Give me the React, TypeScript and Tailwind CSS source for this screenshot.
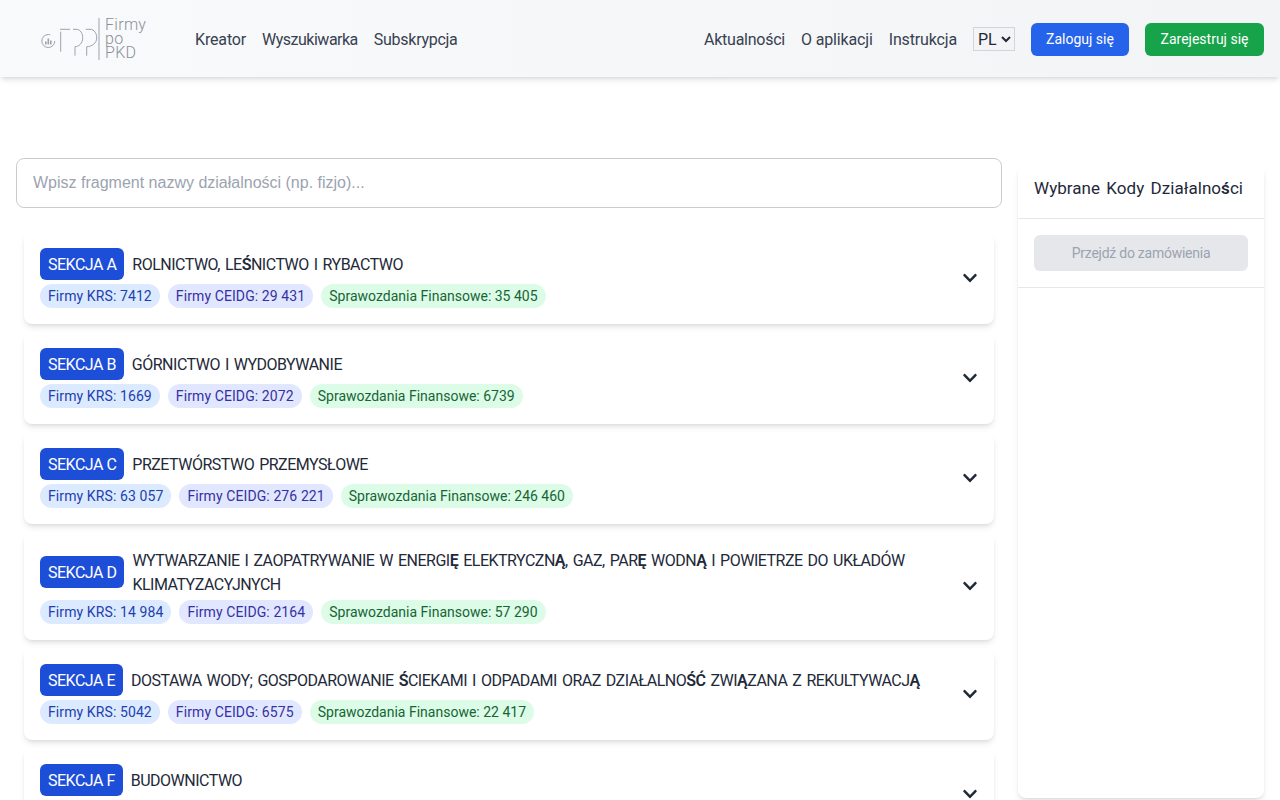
import { FaChevronDown } from "react-icons/fa";

const sections = [
  { letter: "A", title: "ROLNICTWO, LEŚNICTWO I RYBACTWO", krs: "7412", ceidg: "29 431", fin: "35 405" },
  { letter: "B", title: "GÓRNICTWO I WYDOBYWANIE", krs: "1669", ceidg: "2072", fin: "6739" },
  { letter: "C", title: "PRZETWÓRSTWO PRZEMYSŁOWE", krs: "63 057", ceidg: "276 221", fin: "246 460" },
  {
    letter: "D",
    title: "WYTWARZANIE I ZAOPATRYWANIE W ENERGIĘ ELEKTRYCZNĄ, GAZ, PARĘ WODNĄ I POWIETRZE DO UKŁADÓW KLIMATYZACYJNYCH",
    krs: "14 984",
    ceidg: "2164",
    fin: "57 290",
  },
  {
    letter: "E",
    title: "DOSTAWA WODY; GOSPODAROWANIE ŚCIEKAMI I ODPADAMI ORAZ DZIAŁALNOŚĆ ZWIĄZANA Z REKULTYWACJĄ",
    krs: "5042",
    ceidg: "6575",
    fin: "22 417",
  },
  { letter: "F", title: "BUDOWNICTWO", krs: "", ceidg: "", fin: "" },
];

function Heavy({ text }: { text: string }) {
  return (
    <>
      {text.split(/([ŚĘĄĆś]+)/).map((part, i) =>
        i % 2 ? (
          <span key={i} className="font-semibold">
            {part}
          </span>
        ) : (
          part
        )
      )}
    </>
  );
}

function Logo() {
  return (
    <div className="flex items-center w-[155px] h-[44px]">
      <svg width="60" height="44" viewBox="0 0 60 44" fill="none" stroke="#9ca3af" strokeWidth="1">
        <circle cx="8.3" cy="24" r="6.5" strokeDasharray="32 9" />
        <path d="M5.8 27.5v-3M8.3 27.5v-6M10.8 27.5v-4" strokeWidth="1.6" />
        <path d="M20.7 34.7V14.7M20 12.3h10" />
        <path d="M33 12.3h3c5 0 6.7 4.7 6.7 8.7 0 5-3.7 8.7-7.7 8.7v9" />
        <path d="M45.7 12.3H50c4.7 0 6.7 4.7 6.7 8.7 0 5-4.7 8.7-10 8.7v9" />
        <path d="M59 1v42" />
      </svg>
      <div className="ml-[5px] flex flex-col text-[16px] leading-[14px] font-light tracking-[0.3px] text-[#8b9099]">
        <span>Firmy</span>
        <span>po</span>
        <span>PKD</span>
      </div>
    </div>
  );
}

export default function App() {
  return (
    <div className="h-[800px] overflow-hidden bg-white text-gray-800 font-['Roboto',sans-serif]">
      <header className="h-[77px] pt-px flex items-center bg-gradient-to-r from-[#f9fafb] to-[#f3f4f6] shadow-md pl-[40px] pr-4">
        <Logo />
        <nav className="flex gap-4 text-[#374151] translate-y-px">
          <a className="tracking-[-0.15px]">Kreator</a>
          <a className="tracking-[-0.5px]">Wyszukiwarka</a>
          <a className="tracking-[-0.27px]">Subskrypcja</a>
        </nav>
        <div className="ml-auto flex items-center gap-4 text-[#374151]">
          <a className="tracking-[-0.25px] translate-y-px">Aktualności</a>
          <a className="tracking-[-0.15px] translate-y-px">O aplikacji</a>
          <a className="tracking-[-0.15px] translate-y-px">Instrukcja</a>
          <select className="border border-[#d1d5db] bg-[#f3f4f6] h-6 w-[42px] text-[#1f2937]">
            <option>PL</option>
          </select>
          <button className="h-[33px] w-[98px] rounded-md bg-[#2563eb] text-white text-sm">Zaloguj się</button>
          <button className="h-[33px] w-[119px] rounded-md bg-[#16a34a] text-white text-sm">Zarejestruj się</button>
        </div>
      </header>
      <main className="flex gap-4 px-4 pt-[81px]">
        <div className="flex-1 min-w-0">
          <input
            className="w-full h-[50px] px-4 rounded-lg border border-[#ccc] font-['Liberation_Sans',sans-serif] placeholder:text-[#9ca3af]"
            placeholder="Wpisz fragment nazwy działalności (np. fizjo)..."
          />
          <div className="mt-6 px-2 flex flex-col gap-2">
            {sections.map((s) => (
              <div key={s.letter} className="flex items-center rounded-lg bg-white shadow-md p-4 gap-4">
                <div className="flex-1 min-w-0">
                  <div className="flex items-center gap-2">
                    <span className="shrink-0 h-8 px-2 pt-px leading-[31px] rounded-md bg-[#1d4ed8] text-white tracking-[-0.5px]">SEKCJA {s.letter}</span>
                    <span className="translate-y-px leading-6 tracking-[-0.5px] [word-spacing:1.5px]">
                      <Heavy text={s.title} />
                    </span>
                  </div>
                  <div className="mt-1 flex gap-2 text-sm leading-6">
                    <span className="px-2 rounded-full bg-[#dbeafe] text-[#1e40af] tracking-[0.1px]">Firmy KRS: {s.krs}</span>
                    <span className="px-2 rounded-full bg-[#e0e7ff] text-[#3730a3] tracking-[0.1px]">Firmy CEIDG: {s.ceidg}</span>
                    <span className="px-2 rounded-full bg-[#dcfce7] text-[#166534]">Sprawozdania Finansowe: {s.fin}</span>
                  </div>
                </div>
                <FaChevronDown size={16} className="shrink-0 text-[#1f2937]" />
              </div>
            ))}
          </div>
        </div>
        <aside className="w-[246px] h-[632px] mt-2 rounded-lg bg-white shadow-md flex flex-col">
          <div className="h-[53px] px-4 pb-[7px] flex items-center border-b border-[#e5e7eb] text-[17px] whitespace-nowrap tracking-[0.05px] [word-spacing:2px]">
            <span>
              <Heavy text="Wybrane Kody Działalności" />
            </span>
          </div>
          <div className="p-4 border-b border-[#e5e7eb]">
            <button className="w-full h-9 rounded-md bg-[#e5e7eb] text-[#9ca3af] text-sm tracking-[-0.25px]">Przejdź do zamówienia</button>
          </div>
        </aside>
      </main>
    </div>
  );
}
